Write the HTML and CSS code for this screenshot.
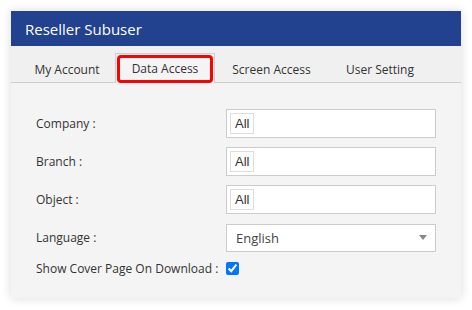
FILE: index.html
```html
<!DOCTYPE html>
<html lang="en">
<head>
    <meta charset="UTF-8">
    <meta name="viewport" content="width=device-width, initial-scale=1.0">
    <title>Reseller Subuser</title>
    <link rel="stylesheet" href="styles.css">
</head>
<body>
    <div class="panel">
        <div class="panel-header">Reseller Subuser</div>

        <ul class="tabs">
            <li class="tab">My Account</li>
            <li class="tab active">Data Access</li>
            <li class="tab">Screen Access</li>
            <li class="tab">User Setting</li>
        </ul>

        <div class="panel-body">
            <div class="form-row">
                <label>Company :</label>
                <div class="tag-input"><span class="tag">All</span></div>
            </div>
            <div class="form-row">
                <label>Branch :</label>
                <div class="tag-input"><span class="tag">All</span></div>
            </div>
            <div class="form-row">
                <label>Object :</label>
                <div class="tag-input"><span class="tag">All</span></div>
            </div>
            <div class="form-row">
                <label>Language :</label>
                <div class="select-box">
                    <span>English</span>
                    <span class="caret"></span>
                </div>
            </div>
            <div class="form-row check-row">
                <label>Show Cover Page On Download :</label>
                <input type="checkbox" checked>
            </div>
        </div>
    </div>
</body>
</html>
```

FILE: styles.css
```css
* {
    box-sizing: border-box;
    margin: 0;
    padding: 0;
}

body {
    font-family: 'Open Sans', sans-serif;
    background: #ffffff;
    color: #333;
    padding: 11px;
}

.panel {
    width: 450px;
    height: 287px;
    background: #f4f4f4;
    box-shadow: 0 0 10px rgba(0, 0, 0, 0.15);
}

.panel-header {
    height: 35px;
    background: #22418e;
    color: white;
    font-size: 15px;
    padding: 0 14px;
    display: flex;
    align-items: center;
}

.tabs {
    list-style: none;
    height: 37px;
    background: #f0f0f0;
    border-bottom: 1px solid #cfcfcf;
    display: flex;
    align-items: flex-end;
    padding-left: 8px;
}

.tab {
    font-size: 12px;
    white-space: nowrap;
    height: 29px;
    display: flex;
    align-items: center;
    justify-content: center;
    position: relative;
    margin-bottom: -1px;
    border: 1px solid transparent;
    border-bottom: none;
}

.tab:nth-child(1) { width: 96px; }
.tab:nth-child(2) { width: 100px; }
.tab:nth-child(3) { width: 113px; }
.tab:nth-child(4) { width: 104px; }

.tab.active {
    background: #f4f4f4;
    border-color: #cfcfcf;
    height: 30px;
}

/* red highlight round the active tab */
.tab.active::after {
    content: "";
    position: absolute;
    left: 1px;
    right: 1px;
    top: 1px;
    bottom: 0;
    border: 3px solid #ff0000;
    border-radius: 4px;
}

.panel-body {
    padding: 26px 25px 0 25px;
}

.form-row {
    display: flex;
    align-items: center;
    height: 29px;
    margin-bottom: 9px;
}

.form-row label {
    width: 190px;
    font-size: 12px;
}

.tag-input {
    flex: 1;
    height: 29px;
    background: white;
    border: 1px solid #cccccc;
    padding: 3px;
    display: flex;
    align-items: center;
}

.tag {
    font-family: 'Liberation Sans', Arial, sans-serif;
    font-size: 13px;
    border: 1px solid #dddddd;
    height: 21px;
    padding: 0 4px;
    display: flex;
    align-items: center;
}

.select-box {
    flex: 1;
    height: 28px;
    background: white;
    border: 1px solid #cccccc;
    padding: 0 8px 0 9px;
    display: flex;
    align-items: center;
    justify-content: space-between;
    font-size: 13px;
    color: #444;
}

.caret {
    width: 0;
    height: 0;
    border-left: 4px solid transparent;
    border-right: 4px solid transparent;
    border-top: 5px solid #888;
}

.check-row {
    height: 16px;
    margin-top: -1px;
}

.check-row input {
    width: 13px;
    height: 13px;
    margin: 0;
}
```
